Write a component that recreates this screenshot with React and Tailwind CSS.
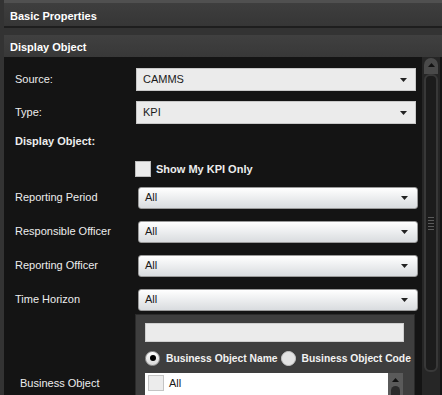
// Display Object properties panel
const Arrow = () => (
  <svg width="7" height="4" viewBox="0 0 7 4" className="shrink-0">
    <path d="M0 0h7L3.5 4z" fill="#222" />
  </svg>
);

function FlatSelect({ value }) {
  return (
    <div className="flex h-[23px] w-[280px] items-center justify-between border border-[#c8c8c8] bg-[#ebebeb] pl-[6px] pr-[8px] text-[11px] text-[#1a1a1a]">
      <span>{value}</span>
      <Arrow />
    </div>
  );
}

function RoundSelect({ value }) {
  return (
    <div className="flex h-[22px] w-[280px] items-center justify-between rounded-[3px] border border-[#9a9a9a] bg-gradient-to-b from-[#ffffff] to-[#d9dcdf] pl-[6px] pr-[9px] text-[11px] text-[#1a1a1a]">
      <span>{value}</span>
      <Arrow />
    </div>
  );
}

export default function App() {
  return (
    <div
      className="h-[395px] w-[442px] overflow-hidden bg-[#333333] pl-[4px]"
      style={{ fontFamily: '"Liberation Sans", Arial, sans-serif' }}
    >
      <div className="h-[3px] bg-[#505050]" />
      {/* Basic Properties header */}
      <div className="flex h-[25px] items-center border-b-2 border-[#1e1e1e] bg-gradient-to-b from-[#3e3e3e] to-[#363636] pl-[6px] pt-[3px] text-[11px] font-bold text-white">
        Basic Properties
      </div>
      <div className="h-[7px] bg-[#333333]" />
      {/* Display Object header */}
      <div className="flex h-[22px] items-center bg-gradient-to-b from-[#404040] to-[#383838] pl-[6px] pt-[2px] text-[11px] font-bold text-white">
        Display Object
      </div>

      <div className="flex h-[340px]">
        {/* Content */}
        <div className="flex-1 bg-[#141414]">
          <div className="flex flex-col">
            <div className="mt-[11px] flex">
              <div className="w-[132px] pl-[11px] pt-[3px] text-[11px] text-[#ededed]">Source:</div>
              <FlatSelect value="CAMMS" />
            </div>
            <div className="mt-[10px] flex">
              <div className="w-[132px] pl-[11px] pt-[3px] text-[11px] text-[#ededed]">Type:</div>
              <FlatSelect value="KPI" />
            </div>
            <div className="mt-[10px] pl-[11px] text-[11px] font-bold leading-[14px] text-[#ededed]">
              Display Object:
            </div>
            <div className="mt-[13px] flex items-center pl-[131px]">
              <div className="h-[16px] w-[16px] border border-[#bdbdbd] bg-[#ececec]" />
              <span className="ml-[5px] text-[11px] font-bold text-[#ededed]">Show My KPI Only</span>
            </div>
            <div className="mt-[9px] flex flex-col gap-[12px]">
              {['Reporting Period', 'Responsible Officer', 'Reporting Officer', 'Time Horizon'].map((l) => (
                <div key={l} className="flex items-center">
                  <div className="w-[134px] pl-[11px] text-[11px] text-[#ededed]">{l}</div>
                  <RoundSelect value="All" />
                </div>
              ))}
            </div>

            {/* Business Object */}
            <div className="mt-[3px] flex">
              <div className="w-[131px] pl-[16px] pt-[61px] text-[11px] text-[#ededed]">Business Object</div>
              <div className="h-[90px] w-[280px] border border-[#2a2a2a] bg-[#3e3e3e] pl-[9px] pr-[10px] pt-[8px]">
                <div className="h-[19px] w-[259px] border border-[#cfcfcf] bg-[#ebebeb]" />
                <div className="mt-[9px] flex items-center whitespace-nowrap text-[10.3px] font-bold text-[#f2f2f2]">
                  <div className="flex h-[15px] w-[15px] shrink-0 items-center justify-center rounded-full border border-[#9a9a9a] bg-gradient-to-b from-[#ffffff] to-[#d6d6d6]">
                    <div className="h-[6px] w-[6px] rounded-full bg-black" />
                  </div>
                  <span className="ml-[6px]">Business Object Name</span>
                  <div className="ml-[3px] h-[15px] w-[15px] shrink-0 rounded-full border border-[#c8c8c8] bg-[#e3e3e3]" />
                  <span className="ml-[6px]">Business Object Code</span>
                </div>
                <div className="mt-[7px] flex h-[40px] w-[258px]">
                  <div className="flex-1 bg-white pl-[3px] pt-[2px]">
                    <div className="flex items-center">
                      <div className="h-[16px] w-[16px] border border-[#c4c4c4] bg-[#ececec]" />
                      <span className="ml-[5px] text-[11px] text-[#1a1a1a]">All</span>
                    </div>
                  </div>
                  <div className="flex w-[15px] flex-col items-center bg-[#5a5a5a] pt-[5px]">
                    <svg width="7" height="4" viewBox="0 0 7 4">
                      <path d="M0 4h7L3.5 0z" fill="#111" />
                    </svg>
                    <div className="mt-[4px] h-[10px] w-[9px] rounded-t-full bg-[#2a2a2a]" />
                  </div>
                </div>
              </div>
            </div>
          </div>
        </div>

        {/* Scrollbar */}
        <div className="flex w-[22px] bg-[#141414] pl-[2px]">
          <div className="flex w-[18px] flex-col items-center bg-[#262626] px-[2px] pt-[1px]">
            <div className="flex h-[16px] w-[14px] items-start justify-center rounded-t-full bg-[#4a4a4a] pt-[5px]">
              <svg width="7" height="4" viewBox="0 0 7 4">
                <path d="M0 4h7L3.5 0z" fill="#111" />
              </svg>
            </div>
            <div className="flex h-[298px] w-[14px] flex-col items-center justify-center gap-[2px] rounded-[6px] border-2 border-[#383838] bg-[#1c1c1c]">
              {[0, 1, 2, 3, 4].map((i) => (
                <div key={i} className="h-[1px] w-[6px] bg-[#5a5a5a]" />
              ))}
            </div>
          </div>
        </div>
      </div>
    </div>
  );
}
